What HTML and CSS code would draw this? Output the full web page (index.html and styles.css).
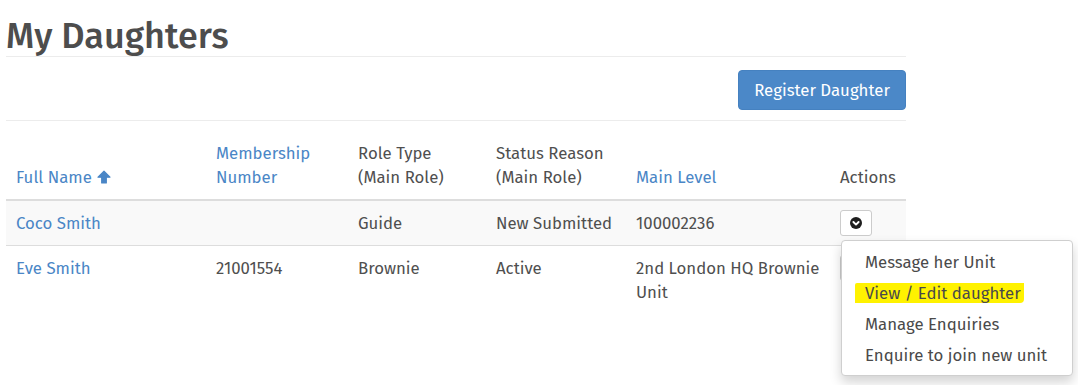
FILE: index.html
```html
<!DOCTYPE html>
<html lang="en">
<head>
<meta charset="utf-8">
<title>My Daughters</title>
<link rel="stylesheet" href="styles.css">
</head>
<body>
<div class="page">
  <div class="page-header">
    <h1>My Daughters</h1>
  </div>
  <div class="toolbar">
    <button class="btn-primary" type="button">Register Daughter</button>
  </div>
  <table class="grid">
    <thead>
      <tr>
        <th class="c-name"><a href="#" class="sort">Full Name <svg class="sort-icon" viewBox="0 0 14 14" width="14" height="14"><path d="M7 1.2 L13 7.2 L9.3 7.2 L9.3 13 L4.7 13 L4.7 7.2 L1 7.2 Z" fill="currentColor" stroke="currentColor" stroke-width="1.2" stroke-linejoin="round"/></svg></a></th>
        <th class="c-num"><a href="#" class="sort">Membership Number</a></th>
        <th class="c-role"><span class="hline">Role Type</span><span class="hline">(Main Role)</span></th>
        <th class="c-status"><span class="hline">Status Reason</span><span class="hline">(Main Role)</span></th>
        <th class="c-level"><a href="#" class="sort">Main Level</a></th>
        <th class="c-actions">Actions</th>
      </tr>
    </thead>
    <tbody>
      <tr class="striped">
        <td><a href="#">Coco Smith</a></td>
        <td></td>
        <td>Guide</td>
        <td>New Submitted</td>
        <td class="level">100002236</td>
        <td>
          <div class="btn-group">
            <button class="btn-drop" type="button" aria-label="Actions">
              <svg viewBox="0 0 12 12" width="12" height="12"><circle cx="6" cy="6" r="6" fill="#1e1e1e"/><path d="M3.4 5 L6 7.6 L8.6 5" fill="none" stroke="#fff" stroke-width="1.9" stroke-linecap="round" stroke-linejoin="round"/></svg>
            </button>
            <ul class="menu">
              <li><a href="#">Message her Unit</a></li>
              <li><a href="#"><span class="highlight">View / Edit daughter</span></a></li>
              <li><a href="#">Manage Enquiries</a></li>
              <li><a href="#">Enquire to join new unit</a></li>
            </ul>
          </div>
        </td>
      </tr>
      <tr>
        <td><a href="#">Eve Smith</a></td>
        <td>21001554</td>
        <td>Brownie</td>
        <td>Active</td>
        <td class="level">2nd London HQ Brownie Unit</td>
        <td>
          <div class="btn-group">
            <button class="btn-drop" type="button" aria-label="Actions">
              <svg viewBox="0 0 12 12" width="12" height="12"><circle cx="6" cy="6" r="6" fill="#1e1e1e"/><path d="M3.4 5 L6 7.6 L8.6 5" fill="none" stroke="#fff" stroke-width="1.9" stroke-linecap="round" stroke-linejoin="round"/></svg>
            </button>
          </div>
        </td>
      </tr>
    </tbody>
  </table>
</div>
</body>
</html>
```
FILE: styles.css
```css
* { box-sizing: border-box; }
html, body {
  margin: 0;
  padding: 0;
  background: #fff;
  min-height: 100vh;
}
body {
  font-family: "Fira Sans", "Open Sans", "Noto Sans", sans-serif;
  font-size: 16.8px;
  line-height: 24px;
  color: #4f4f4f;
}
a { color: #4a86c6; text-decoration: none; }

.page {
  width: 900px;
  margin-left: 6px;
}
.page-header {
  padding-top: 16px;
  padding-bottom: 0;
  border-bottom: 1px solid #ececec;
}
h1 {
  margin: 0;
  font-size: 36px;
  line-height: 40px;
  font-weight: 500;
  color: #4d4d4d;
}
.toolbar {
  display: flex;
  justify-content: flex-end;
  padding-top: 13px;
  padding-bottom: 10px;
  border-bottom: 1px solid #ececec;
}
.btn-primary {
  height: 40px;
  width: 168px;
  padding: 0;
  font-family: inherit;
  font-size: 16.8px;
  color: #fff;
  background: #4b88c8;
  border: 1px solid #4581c0;
  border-radius: 4px;
}

.grid {
  width: 900px;
  margin-top: 10px;
  border-collapse: collapse;
  table-layout: fixed;
}
.grid th, .grid td {
  padding: 10px;
  text-align: left;
  line-height: 24px;
}
.grid th {
  font-weight: 400;
  vertical-align: bottom;
  border-bottom: 2px solid #dddddd;
}
.grid td {
  vertical-align: top;
  border-top: 1px solid #dddddd;
}
.grid td.level { padding-right: 6px; }
.grid tr.striped td { background: #f9f9f9; }
.hline { display: block; }
.c-name { width: 200px; }
.c-num { width: 142px; }
.c-role { width: 138px; }
.c-status { width: 140px; }
.c-level { width: 204px; }
.c-actions { width: 76px; }

.sort-icon {
  vertical-align: -1px;
  margin-left: 1px;
}

.btn-group {
  position: relative;
  display: inline-block;
  height: 24px;
}
.btn-drop {
  width: 32px;
  height: 26px;
  margin-top: -1px;
  padding: 0;
  display: flex;
  align-items: center;
  justify-content: center;
  background: #fff;
  border: 1px solid #cccccc;
  border-radius: 3px;
}
.menu {
  position: absolute;
  z-index: 10;
  top: 29px;
  left: 1px;
  width: 232px;
  margin: 0;
  padding: 5px 0;
  list-style: none;
  background: #fff;
  border: 1px solid #cfcfcf;
  border-radius: 4px;
  box-shadow: 0 6px 12px rgba(0, 0, 0, 0.175);
}
.menu li a {
  display: block;
  padding: 3.5px 23px;
  line-height: 24px;
  color: #4a4a4a;
  white-space: nowrap;
}
.highlight {
  display: inline-block;
  line-height: 20px;
  margin-left: -10px;
  padding: 0 3px 0 10px;
  background: #fff200;
  border-radius: 2px 0 4px 0;
}
```
